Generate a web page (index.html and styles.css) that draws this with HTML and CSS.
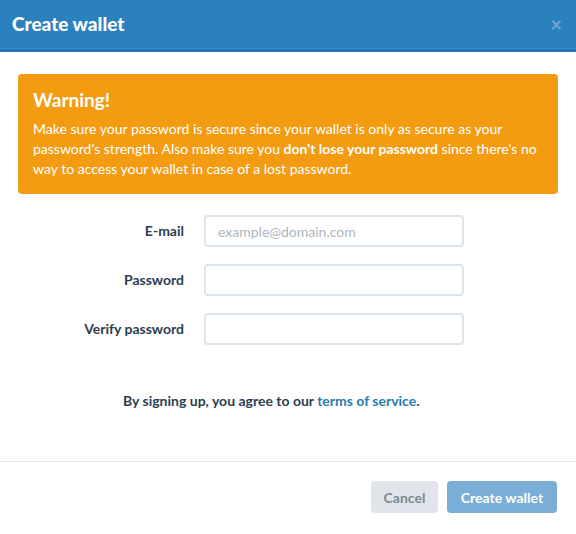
FILE: index.html
```html
<!DOCTYPE html>
<html>
<head>
<meta charset="utf-8">
<link rel="stylesheet" href="styles.css">
</head>
<body>
<div class="modal">
  <div class="modal-header">
    <h1 class="modal-title">Create wallet</h1>
    <span class="close">×</span>
  </div>
  <div class="modal-body">
    <div class="alert">
      <h2 class="alert-title">Warning!</h2>
      <p class="alert-text">Make sure your password is secure since your wallet is only as secure as your password's strength. Also make sure you <strong>don't lose your password</strong> since there's no way to access your wallet in case of a lost password.</p>
    </div>
    <div class="form">
      <label class="label">E-mail</label>
      <input class="input" type="text" placeholder="example@domain.com">
      <label class="label">Password</label>
      <input class="input" type="password">
      <label class="label">Verify password</label>
      <input class="input" type="password">
    </div>
    <p class="terms">By signing up, you agree to our <a class="link" href="#">terms of service</a>.</p>
  </div>
  <div class="modal-footer">
    <button class="btn btn-cancel">Cancel</button>
    <button class="btn btn-primary">Create wallet</button>
  </div>
</div>
</body>
</html>
```

FILE: styles.css
```css
* { box-sizing: border-box; }
html, body { margin: 0; padding: 0; background: #fff; }
body {
  font-family: Lato, "Open Sans", "Liberation Sans", sans-serif;
  font-size: 14px;
  line-height: 20px;
  color: #2c3e50;
}
.modal { width: 576px; height: 534px; display: flex; flex-direction: column; }
.modal-header {
  height: 52px;
  background: #2b80be;
  border-bottom: 3px solid #2676b3;
  box-shadow: inset 0 -4px 0 -3px #3a8ac6;
  display: flex;
  align-items: center;
  justify-content: space-between;
  padding: 0 14px 2px 12px;
}
.modal-title { margin: 0; font-size: 19px; font-weight: 900; color: #fff; line-height: 24px; }
.close { color: #6aa6d4; font-size: 20px; font-weight: 700; line-height: 20px; }
.modal-body { padding: 22px 18px 0; height: 410px; border-bottom: 1px solid #e5e5e5; }
.alert {
  background: #f39c12;
  border-radius: 4px;
  padding: 15px;
  color: #fff;
  height: 120px;
}
.alert-title { margin: 0 0 8px; font-size: 19px; line-height: 22px; font-weight: 700; }
.alert-text { margin: 0; }
.form {
  display: grid;
  grid-template-columns: 166px 260px;
  column-gap: 20px;
  row-gap: 17px;
  margin-top: 21px;
  align-items: center;
}
.label { text-align: right; font-weight: 700; }
.input {
  height: 32px;
  border: 2px solid #dce4ec;
  border-radius: 4px;
  padding: 0 12px;
  font-family: inherit;
  font-size: 14px;
  color: #2c3e50;
}
.input::placeholder { color: #acb6c0; }
.terms { margin: 46px 0 0 105px; font-weight: 700; }
.link { color: #2a7ab0; text-decoration: none; }
.modal-footer {
  display: flex;
  justify-content: flex-end;
  gap: 9px;
  padding: 19px 19px 0 0;
}
.btn {
  height: 32px;
  border: none;
  border-radius: 4px;
  font-family: inherit;
  font-size: 14px;
  font-weight: 700;
  padding: 0 12px;
}
.btn-cancel { background: #dfe5eb; color: #7b8a8b; width: 67px; }
.btn-primary { background: #7aaed6; color: #fff; width: 110px; }
```
